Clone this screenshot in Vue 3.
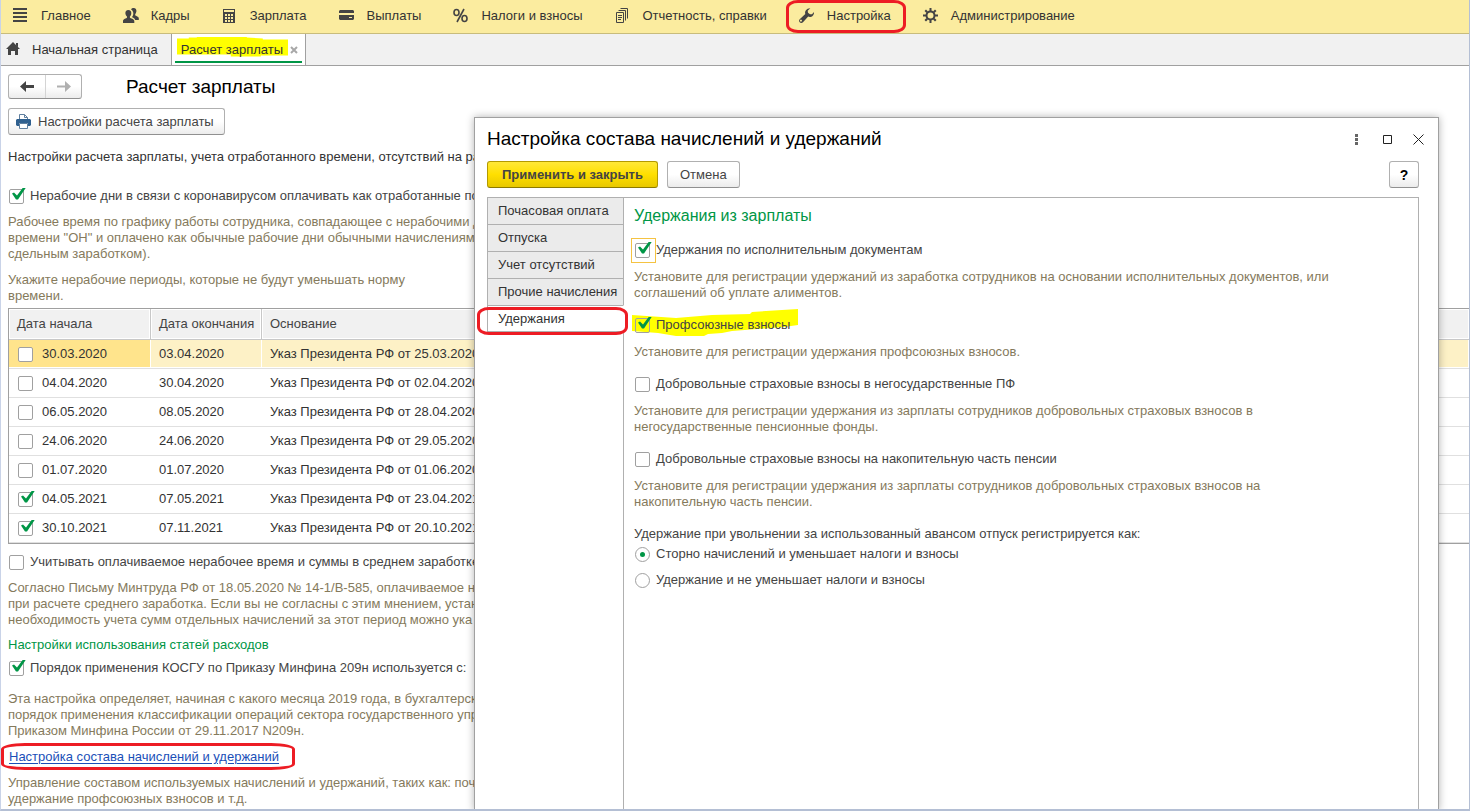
<script setup>
import { ref } from 'vue'

const sections = [
  { id: 'main', name: 'Главное' },
  { id: 'staff', name: 'Кадры' },
  { id: 'salary', name: 'Зарплата' },
  { id: 'payments', name: 'Выплаты' },
  { id: 'taxes', name: 'Налоги и взносы' },
  { id: 'reports', name: 'Отчетность, справки' },
  { id: 'settings', name: 'Настройка', marked: true },
  { id: 'admin', name: 'Администрирование' }
]

const periods = ref([
  { start: '30.03.2020', end: '03.04.2020', reason: 'Указ Президента РФ от 25.03.2020', used: false },
  { start: '04.04.2020', end: '30.04.2020', reason: 'Указ Президента РФ от 02.04.2020', used: false },
  { start: '06.05.2020', end: '08.05.2020', reason: 'Указ Президента РФ от 28.04.2020', used: false },
  { start: '24.06.2020', end: '24.06.2020', reason: 'Указ Президента РФ от 29.05.2020', used: false },
  { start: '01.07.2020', end: '01.07.2020', reason: 'Указ Президента РФ от 01.06.2020', used: false },
  { start: '04.05.2021', end: '07.05.2021', reason: 'Указ Президента РФ от 23.04.2021', used: true },
  { start: '30.10.2021', end: '07.11.2021', reason: 'Указ Президента РФ от 20.10.2021', used: true }
])
const currentRow = ref(0)

const pages = ['Почасовая оплата', 'Отпуска', 'Учет отсутствий', 'Прочие начисления', 'Удержания']
const currentPage = ref('Удержания')

const options = ref({
  covid: true,
  average: false,
  kosgu: true,
  writs: true,
  union: true,
  pension: false,
  funded: false,
  advance: 'storno'
})
</script>

<template>
  <div class="app">
    <nav class="sections">
      <a v-for="s in sections" :key="s.id" class="section" :class="{ marked: s.marked }" href="#">
        <svg class="icon" viewBox="0 0 15 15">
          <g v-if="s.id === 'main'">
            <path d="M0 0h14v2H0zM0 4h14v2H0zM0 8h14v2H0zM0 12h14v2H0z" />
          </g>
          <g v-else-if="s.id === 'staff'">
            <path d="M8 1.5C8.6.4 9.600 0 10.700 0c2 0 3 1.600 2.700 3.600-.2 1.200-.7 2-1.200 2.600v1c.5 1 3.600 1 3.600 3.100V12h-3.600c-.4-1.800-2.700-2.500-3.200-3 .9-1 1.400-2.400 1.300-4C10.200 3.400 9.300 2.200 8 1.500z" />
            <path d="M5.300 2C7.400 2 8.500 3.500 8.300 5.500 8.200 6.800 7.600 8 6.900 8.600v1c.6 1.200 4.400 1.100 4.400 3.600V15H0v-1.800c0-2.500 3.500-2.400 4-3.600v-1C3.200 8 2.600 6.800 2.400 5.500 2.200 3.500 3.300 2 5.300 2z" />
          </g>
          <g v-else-if="s.id === 'salary'">
            <path fill-rule="evenodd" d="M1 1h12v14H1zM2 2v2h10V2zM3 6v2h2V6zm3 0v2h2V6zm3 0v2h2V6zM3 9v2h2V9zm3 0v2h2V9zm3 0v2h2V9zM3 12v2h2v-2zm3 0v2h2v-2zm3 0v2h2v-2z" />
          </g>
          <g v-else-if="s.id === 'payments'">
            <path fill-rule="evenodd" d="M1 2h13l1 1v2H0V3zM0 7h15v4l-1 1H1l-1-1zM10 9v1h3V9z" />
          </g>
          <g v-else-if="s.id === 'taxes'" class="percent">
            <ellipse cx="3.500" cy="4.500" rx="2.500" ry="3" />
            <ellipse cx="11.500" cy="10.500" rx="2.500" ry="3" />
            <path d="M11 1L4 14" />
          </g>
          <g v-else-if="s.id === 'reports'" class="thin">
            <path d="M1.500 4.500h7v10h-7zM3.500 2.500h7v10M5.500.5h7v10M3 7.500h4M3 9.500h4M3 11.500h3" />
          </g>
          <g v-else-if="s.id === 'settings'">
            <path d="M11.300.2L8.700 2.800l.3 2L11 6.200l2 .1L15 4c.3 2.500-1.200 4.700-3.500 4.900-.9.100-1.600 0-2.300-.3L4 14.200c-1 1-2.500.9-3.300.1s-.9-2 0-3L6.300 6.100C5.400 3.300 7.500.100 11.300.2zM2.500 11.800a1 1 0 100 1.600 1 1 0 000-1.600z" />
          </g>
          <g v-else>
            <circle class="ring" cx="7.500" cy="7.500" r="4" />
            <path d="M6.500 0h2v3h-2zM6.500 12h2v3h-2zM0 6.500h3v2H0zM12 6.500h3v2h-3zM1.500 3l1.500-1.500 2 2L3.500 5zM12 1.500L13.500 3l-2 2L10 3.500zM3.500 10L5 11.500l-2 2L1.500 12zM11.500 10l2 2-1.500 1.500-2-2z" />
          </g>
        </svg>
        {{ s.name }}
      </a>
    </nav>

    <div class="tabs">
      <a class="tab home" href="#">
        <svg class="icon" viewBox="0 0 15 15">
          <path d="M7 0l7 7h-2v6H9V9H5v4H2V7H0zM10 1h2v4l-2-2z" />
        </svg>
        Начальная страница
      </a>
      <div class="tab active">
        <span class="highlight tab-highlight">Расчет зарплаты</span>
        <button class="tab-close" type="button" aria-label="Закрыть">
          <svg viewBox="0 0 8 8"><path d="M1 1l6 6M7 1L1 7" /></svg>
        </button>
      </div>
    </div>

    <main class="form">
      <header class="form-head">
        <div class="history">
          <button type="button" aria-label="Назад">
            <svg viewBox="0 0 14 11"><path d="M0 5.500L6 0v4h8v3H6v4z" /></svg>
          </button>
          <button type="button" aria-label="Вперед" disabled>
            <svg viewBox="0 0 14 11"><path d="M14 5.500L8 0v4.500H0v2h8V11z" /></svg>
          </button>
        </div>
        <h1>Расчет зарплаты</h1>
      </header>

      <button class="button print" type="button">
        <svg viewBox="0 0 15 15">
          <path class="paper" d="M3.500 6V.500h5l3 3V6M8.500.500v3h3" />
          <path class="body" d="M1 5h13l1 1v5l-1 1h-2V9H3v3H1l-1-1V6z" />
          <path class="paper" d="M3.500 9.500h8v5h-8z" />
        </svg>
        Настройки расчета зарплаты
      </button>

      <p class="lead">Настройки расчета зарплаты, учета отработанного времени, отсутствий на раб</p>

      <label class="check covid">
        <input v-model="options.covid" type="checkbox" />
        Нерабочие дни в связи с коронавирусом оплачивать как отработанные по
      </label>
      <p class="hint">
        Рабочее время по графику работы сотрудника, совпадающее с нерабочими д<br />
        времени "ОН" и оплачено как обычные рабочие дни обычными начислениями<br />
        сдельным заработком).
      </p>
      <p class="hint">
        Укажите нерабочие периоды, которые не будут уменьшать норму<br />
        времени.
      </p>

      <table class="periods">
        <thead>
          <tr>
            <th class="start">Дата начала</th>
            <th class="end">Дата окончания</th>
            <th>Основание</th>
          </tr>
        </thead>
        <tbody>
          <tr v-for="(p, i) in periods" :key="p.start" :class="{ current: i === currentRow }" @click="currentRow = i">
            <td>
              <label class="check">
                <input v-model="p.used" type="checkbox" />
                {{ p.start }}
              </label>
            </td>
            <td>{{ p.end }}</td>
            <td>{{ p.reason }}</td>
          </tr>
        </tbody>
      </table>

      <label class="check average">
        <input v-model="options.average" type="checkbox" />
        Учитывать оплачиваемое нерабочее время и суммы в среднем заработке
      </label>
      <p class="hint">
        Согласно Письму Минтруда РФ от 18.05.2020 № 14-1/В-585, оплачиваемое н<br />
        при расчете среднего заработка. Если вы не согласны с этим мнением, устан<br />
        необходимость учета сумм отдельных начислений за этот период можно ука
      </p>

      <h2 class="group">Настройки использования статей расходов</h2>
      <label class="check kosgu">
        <input v-model="options.kosgu" type="checkbox" />
        Порядок применения КОСГУ по Приказу Минфина 209н используется с:
      </label>
      <p class="hint kosgu-hint">
        Эта настройка определяет, начиная с какого месяца 2019 года, в бухгалтерск<br />
        порядок применения классификации операций сектора государственного упр<br />
        Приказом Минфина России от 29.11.2017 N209н.
      </p>

      <a class="link" href="#">Настройка состава начислений и удержаний</a>
      <p class="hint">
        Управление составом используемых начислений и удержаний, таких как: поча<br />
        удержание профсоюзных взносов и т.д.
      </p>
    </main>

    <section class="dialog" role="dialog" aria-labelledby="dialog-title">
      <header class="dialog-head">
        <h2 id="dialog-title">Настройка состава начислений и удержаний</h2>
        <div class="window-buttons">
          <button type="button" aria-label="Меню">
            <svg viewBox="0 0 11 11"><path d="M4 0h3v3H4zM4 4h3v3H4zM4 8h3v3H4z" /></svg>
          </button>
          <button type="button" aria-label="Развернуть">
            <svg class="line" viewBox="0 0 11 11"><path d="M1.500 1.500h8v8h-8z" /></svg>
          </button>
          <button type="button" aria-label="Закрыть окно">
            <svg class="line" viewBox="0 0 11 11"><path d="M.5.5l10 10M10.500.5l-10 10" /></svg>
          </button>
        </div>
      </header>

      <div class="commands">
        <button class="button primary" type="button">Применить и закрыть</button>
        <button class="button cancel" type="button">Отмена</button>
        <button class="button help" type="button">?</button>
      </div>

      <div class="pages">
        <div class="page-list" role="tablist">
          <button
            v-for="page in pages"
            :key="page"
            type="button"
            role="tab"
            class="page-tab"
            :class="{ selected: page === currentPage }"
            :aria-selected="page === currentPage"
            @click="currentPage = page"
          >
            {{ page }}
          </button>
        </div>

        <div class="page" role="tabpanel">
          <h3>Удержания из зарплаты</h3>

          <label class="check focused">
            <input v-model="options.writs" type="checkbox" />
            Удержания по исполнительным документам
          </label>
          <p class="hint">
            Установите для регистрации удержаний из заработка сотрудников на основании исполнительных документов, или<br />
            соглашений об уплате алиментов.
          </p>

          <label class="check highlight union-highlight">
            <input v-model="options.union" type="checkbox" />
            Профсоюзные взносы
          </label>
          <p class="hint">Установите для регистрации удержания профсоюзных взносов.</p>

          <label class="check">
            <input v-model="options.pension" type="checkbox" />
            Добровольные страховые взносы в негосударственные ПФ
          </label>
          <p class="hint">
            Установите для регистрации удержания из зарплаты сотрудников добровольных страховых взносов в<br />
            негосударственные пенсионные фонды.
          </p>

          <label class="check">
            <input v-model="options.funded" type="checkbox" />
            Добровольные страховые взносы на накопительную часть пенсии
          </label>
          <p class="hint">
            Установите для регистрации удержания из зарплаты сотрудников добровольных страховых взносов на<br />
            накопительную часть пенсии.
          </p>

          <fieldset class="advance">
            <legend>Удержание при увольнении за использованный авансом отпуск регистрируется как:</legend>
            <label class="check">
              <input v-model="options.advance" type="radio" name="advance" value="storno" />
              Сторно начислений и уменьшает налоги и взносы
            </label>
            <label class="check">
              <input v-model="options.advance" type="radio" name="advance" value="deduction" />
              Удержание и не уменьшает налоги и взносы
            </label>
          </fieldset>
        </div>
      </div>
    </section>
  </div>
</template>

<style>
body {
  background: #fff;
}
</style>

<style scoped>
.app {
  position: relative;
  box-sizing: border-box;
  height: 100vh;
  overflow: hidden;
  border: solid #b4bfd4;
  border-width: 0 1px 2px;
  border-left-color: #c9d3e8;
  background: #fff;
  color: #333;
  font-family: 'Liberation Sans', Arial, sans-serif;
  font-size: 13px;
  line-height: 16px;
}
.app * {
  box-sizing: border-box;
}
button {
  padding: 0;
  border: 0;
  background: none;
  color: inherit;
  font: inherit;
}
a {
  color: inherit;
  text-decoration: none;
}
h1,
h2,
h3,
p {
  margin: 0;
  font-weight: normal;
}

/* sections panel */
.sections {
  display: flex;
  height: 34px;
  padding-left: 12px;
  gap: 32px;
  border-bottom: 1px solid #c8bc7c;
  background: #fbec9f;
}
.section {
  position: relative;
  display: flex;
  align-items: center;
  gap: 13px;
  padding-bottom: 2px;
  white-space: nowrap;
}
.icon {
  width: 15px;
  height: 15px;
  fill: #444;
  overflow: visible;
}
.icon .percent,
.icon .ring {
  fill: none;
  stroke: #444;
  stroke-width: 2;
}
.icon .percent {
  stroke-width: 1.6;
}
.icon .thin {
  fill: none;
  stroke: #444;
  stroke-width: 1;
}
.marked::after,
.page-tab.selected::after,
.link::after {
  content: '';
  position: absolute;
  border: 3px solid #ed1c24;
  border-radius: 12px / 8px;
  pointer-events: none;
}
.marked::after {
  inset: 0 -15px 0 -13px;
}

/* open windows */
.tabs {
  display: flex;
  height: 32px;
  border-bottom: 1px solid #a0a0a0;
  background: #f1f1f1;
}
.tab {
  display: flex;
  align-items: center;
}
.home {
  gap: 11px;
  padding: 0 13px 0 5px;
}
.tab.active {
  position: relative;
  gap: 7px;
  padding: 0 7px 0 9px;
  border: solid #a0a0a0;
  border-width: 0 1px;
  background: #fff;
}
.tab.active::after {
  content: '';
  position: absolute;
  left: 3px;
  right: 3px;
  bottom: 2px;
  height: 2px;
  background: #009646;
}
.tab-close svg {
  display: block;
  width: 8px;
  height: 8px;
  stroke: #a8a8a8;
  stroke-width: 2;
}
.highlight {
  position: relative;
  z-index: 0;
}
.highlight::before {
  content: '';
  position: absolute;
  z-index: -1;
  background: #ff0;
}
.tab-highlight::before {
  inset: -5px -5px -2px -4px;
  clip-path: polygon(0 2px, 12px 2px, 12px 1px, 20px 1px, 20px 0, 70px 0, 70px 1px, 86px 2px, 86px 3px, 100% 3px, 100% 19px, 84px 19px, 84px 20px, 54px 20px, 54px 18px, 0 18px);
}

/* main form */
.form {
  display: flex;
  flex-direction: column;
  align-items: flex-start;
  padding: 8px 0 0 7px;
  white-space: nowrap;
}
.form-head {
  display: flex;
  align-items: center;
  gap: 44px;
}
h1,
.dialog-head h2 {
  color: #000;
  font-size: 19px;
  line-height: 24px;
}
.history {
  display: flex;
  height: 25px;
  border: 1px solid #b0b0b0;
  border-bottom-color: #909090;
  border-radius: 3px;
  background: linear-gradient(#fff 50%, #ececec);
}
.history button {
  display: flex;
  align-items: center;
  justify-content: center;
  width: 36px;
}
.history button + button {
  border-left: 1px solid #d4d4d4;
}
.history svg {
  width: 14px;
  height: 11px;
  fill: #444;
}
.history button:disabled svg {
  fill: #b0b0b0;
}
.button {
  display: flex;
  align-items: center;
  justify-content: center;
  height: 27px;
  border: 1px solid #b0b0b0;
  border-bottom-color: #909090;
  border-radius: 3px;
  background: linear-gradient(#fff 50%, #ececec);
  color: #444;
}
.print {
  gap: 7px;
  margin-top: 9px;
  padding: 0 10px 0 7px;
}
.print svg {
  width: 15px;
  height: 15px;
}
.print .paper {
  fill: #fff;
  stroke: #5f7f9f;
}
.print .body {
  fill: #2f608f;
}
.lead {
  margin-top: 14px;
}
.check {
  display: flex;
  align-items: center;
  gap: 6px;
  padding-left: 1px;
  color: #444;
}
.check input {
  appearance: none;
  position: relative;
  width: 15px;
  height: 15px;
  margin: 0;
  border: 1px solid #a0a0a0;
  border-radius: 2px;
  background: #fff;
}
.check input[type='radio'] {
  border-radius: 50%;
}
.check input[type='checkbox']:checked::before {
  content: '';
  position: absolute;
  left: 2px;
  top: -2px;
  width: 14px;
  height: 13px;
  background: #009646;
  clip-path: polygon(0 6px, 2px 5px, 5px 8px, 11px 0, 14px 0, 6px 12px, 4px 12px);
}
.check input[type='radio']:checked::before {
  content: '';
  position: absolute;
  inset: 4px;
  border-radius: 50%;
  background: #009646;
}
.covid {
  margin-top: 23px;
}
.hint {
  margin-top: 10px;
  color: #857a5c;
}
.periods {
  width: 100%;
  margin-top: 4px;
  border: 1px solid #a0a0a0;
  border-right: 0;
  border-spacing: 0;
  table-layout: fixed;
}
.periods th {
  height: 31px;
  padding: 0 8px;
  border-right: 1px solid #c8c8c8;
  border-bottom: 1px solid #c8c8c8;
  background: #f1f1f1;
  box-shadow: inset 0 0 0 1px #fff;
  color: #444;
  font-weight: normal;
  text-align: left;
}
.periods th:last-child {
  border-right: 0;
}
.periods .start {
  width: 142px;
}
.periods .end {
  width: 111px;
}
.periods td {
  height: 29px;
  padding: 0 8px;
  border-bottom: 1px solid #e0e0e0;
}
.periods .check {
  gap: 9px;
  color: inherit;
}
.current td {
  background: #fdf1c6;
  box-shadow: inset -1px -1px #fff;
}
.current td:first-child {
  background: #ffe48c;
}
.average {
  margin-top: 10px;
}
.group {
  margin-top: 9px;
  color: #009646;
  font-size: 13px;
}
.kosgu {
  margin-top: 7px;
}
.kosgu-hint {
  margin-top: 15px;
}
.link {
  position: relative;
  margin-top: 10px;
  padding-left: 1px;
  color: #1a4fb8;
  text-decoration: underline;
  text-underline-offset: 2px;
}
.link::after {
  inset: -6px -16px -5px -7px;
  border-radius: 24px / 6px;
}

/* settings window */
.dialog {
  position: absolute;
  z-index: 1;
  top: 117px;
  right: 30px;
  bottom: -2px;
  left: 473px;
  display: flex;
  flex-direction: column;
  padding: 9px 19px 0 12px;
  border: 1px solid #a0a0a0;
  border-bottom: 0;
  background: #fff;
  box-shadow: 0 0 8px rgba(0, 0, 0, 0.3);
}
.dialog-head {
  display: flex;
  align-items: center;
  justify-content: space-between;
}
.window-buttons {
  display: flex;
  gap: 20px;
  margin-right: -5px;
}
.window-buttons svg {
  display: block;
  width: 11px;
  height: 11px;
  fill: #666;
}
.window-buttons .line {
  fill: none;
  stroke: #222;
}
.commands {
  display: flex;
  gap: 9px;
  margin-top: 10px;
}
.primary {
  padding: 0 14px;
  border-color: #b39a00;
  border-bottom-color: #8c7900;
  background: linear-gradient(#ffe838, #ffdf00 50%, #e8c800);
  font-weight: bold;
}
.cancel {
  padding: 0 12px;
}
.help {
  width: 30px;
  margin-left: auto;
  color: #000;
  font-size: 14px;
  font-weight: bold;
}
.pages {
  display: flex;
  flex: 1;
  margin-top: 9px;
}
.page-list {
  position: relative;
  z-index: 1;
  display: flex;
  flex-direction: column;
  width: 137px;
  margin-right: -1px;
}
.page-tab {
  position: relative;
  height: 27px;
  padding-left: 10px;
  border: solid #b0b0b0;
  border-width: 1px 1px 0;
  background: #ebebeb;
  text-align: left;
  white-space: nowrap;
}
.page-tab.selected {
  border-right-color: #fff;
  border-bottom-width: 1px;
  background: #fff;
}
.page-tab.selected::after {
  inset: 1px -5px -4px -11px;
}
.page {
  flex: 1;
  padding: 8px 10px 0;
  border: 1px solid #b0b0b0;
  border-bottom: 0;
}
.page h3 {
  margin-bottom: 16px;
  color: #009646;
  font-size: 16px;
  line-height: 20px;
}
.page .hint {
  margin: 11px 0 16px;
}
.focused {
  position: relative;
}
.focused::before {
  content: '';
  position: absolute;
  left: -3px;
  top: -4px;
  width: 23px;
  height: 23px;
  border: 1px solid #f5c342;
}
.union-highlight::before {
  left: -2px;
  top: -8px;
  width: 166px;
  height: 28px;
  clip-path: polygon(0 6px, 44px 9px, 80px 6px, 118px 5px, 120px 3px, 150px 1px, 166px 0, 166px 16px, 152px 18px, 100px 22px, 90px 24px, 76px 25px, 72px 27px, 44px 27px, 26px 24px, 0 22px);
}
.union-highlight input {
  background: none;
}
.advance {
  display: flex;
  flex-direction: column;
  gap: 10px;
  margin: 0;
  padding: 0;
  border: 0;
}
.advance legend {
  margin-bottom: 4px;
  padding: 0;
  color: #444;
}
</style>
